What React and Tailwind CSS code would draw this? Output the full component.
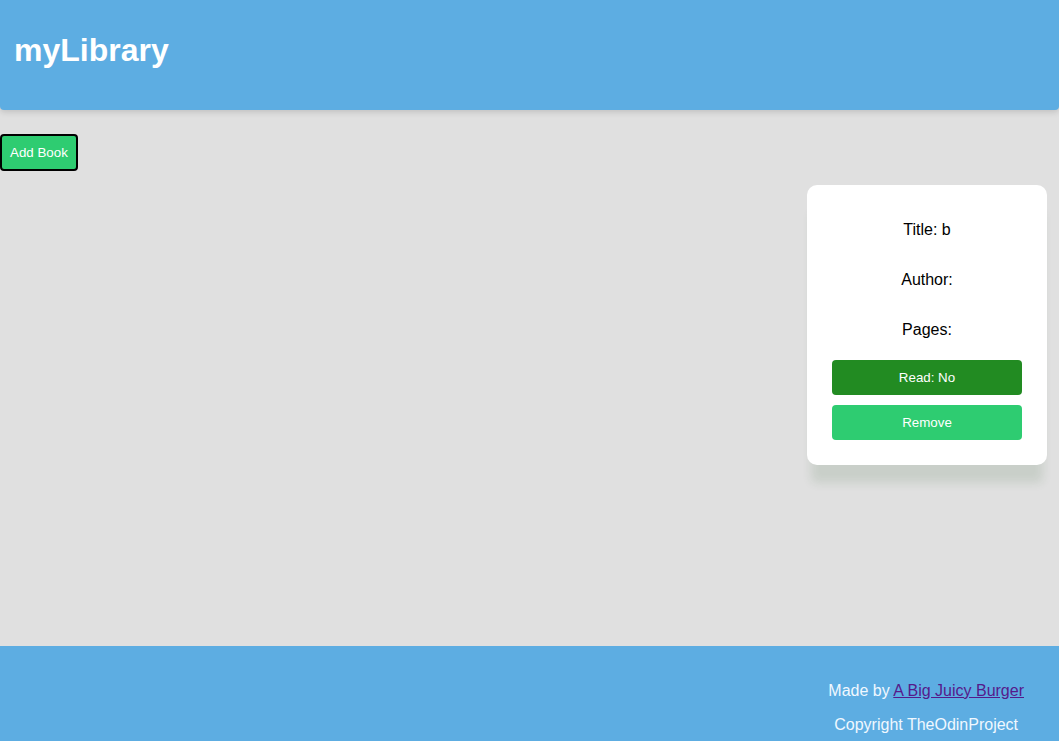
export default function App() {
  return (
    <div className="min-h-screen flex flex-col bg-[#e0e0e0] font-['Liberation_Sans',Arial,sans-serif]">
      {/* header */}
      <header className="h-[110px] flex items-center px-[14px] bg-[#5dade2] rounded-b-[4px] shadow-[0_2px_6px_rgba(0,0,0,0.15)] relative z-10">
        <h1 className="text-[32px] font-bold text-white leading-none -mt-[10px]">myLibrary</h1>
      </header>

      {/* content */}
      <main className="h-[536px] flex flex-col">
        <div className="pt-[24px]">
          <button className="h-[37px] px-[8px] bg-[#2ecc71] border-2 border-black rounded-[4px] text-[13.333px] text-white">
            Add Book
          </button>
        </div>
        <div className="flex justify-end pr-[12px] pt-[14px]">
          <div className="w-[240px] bg-white rounded-[10px] px-[25px] pt-[20px] pb-[25px] shadow-[0_22px_10px_-4px_rgba(40,90,40,0.12)] text-center text-[16px] text-black">
            <p className="h-[50px] flex items-center justify-center">Title: b</p>
            <p className="h-[50px] flex items-center justify-center">Author:</p>
            <p className="h-[50px] flex items-center justify-center">Pages:</p>
            <button className="mt-[5px] w-full h-[35px] bg-[#228b22] rounded-[4px] text-[13.333px] text-white">Read: No</button>
            <button className="mt-[10px] w-full h-[35px] bg-[#2ecc71] rounded-[4px] text-[13.333px] text-white">Remove</button>
          </div>
        </div>
      </main>

      {/* footer */}
      <footer className="h-[120px] bg-[#5dade2] flex justify-end pr-[35px]">
        <div className="flex flex-col items-center text-[16px] text-[#f0f8ff]">
          <p className="h-[18px] mt-[36px] leading-[18px]">
            Made by <a href="#" className="underline text-[#551a8b]">A Big Juicy Burger</a>
          </p>
          <p className="h-[18px] mt-[16px] leading-[18px]">Copyright TheOdinProject</p>
        </div>
      </footer>
    </div>
  )
}
